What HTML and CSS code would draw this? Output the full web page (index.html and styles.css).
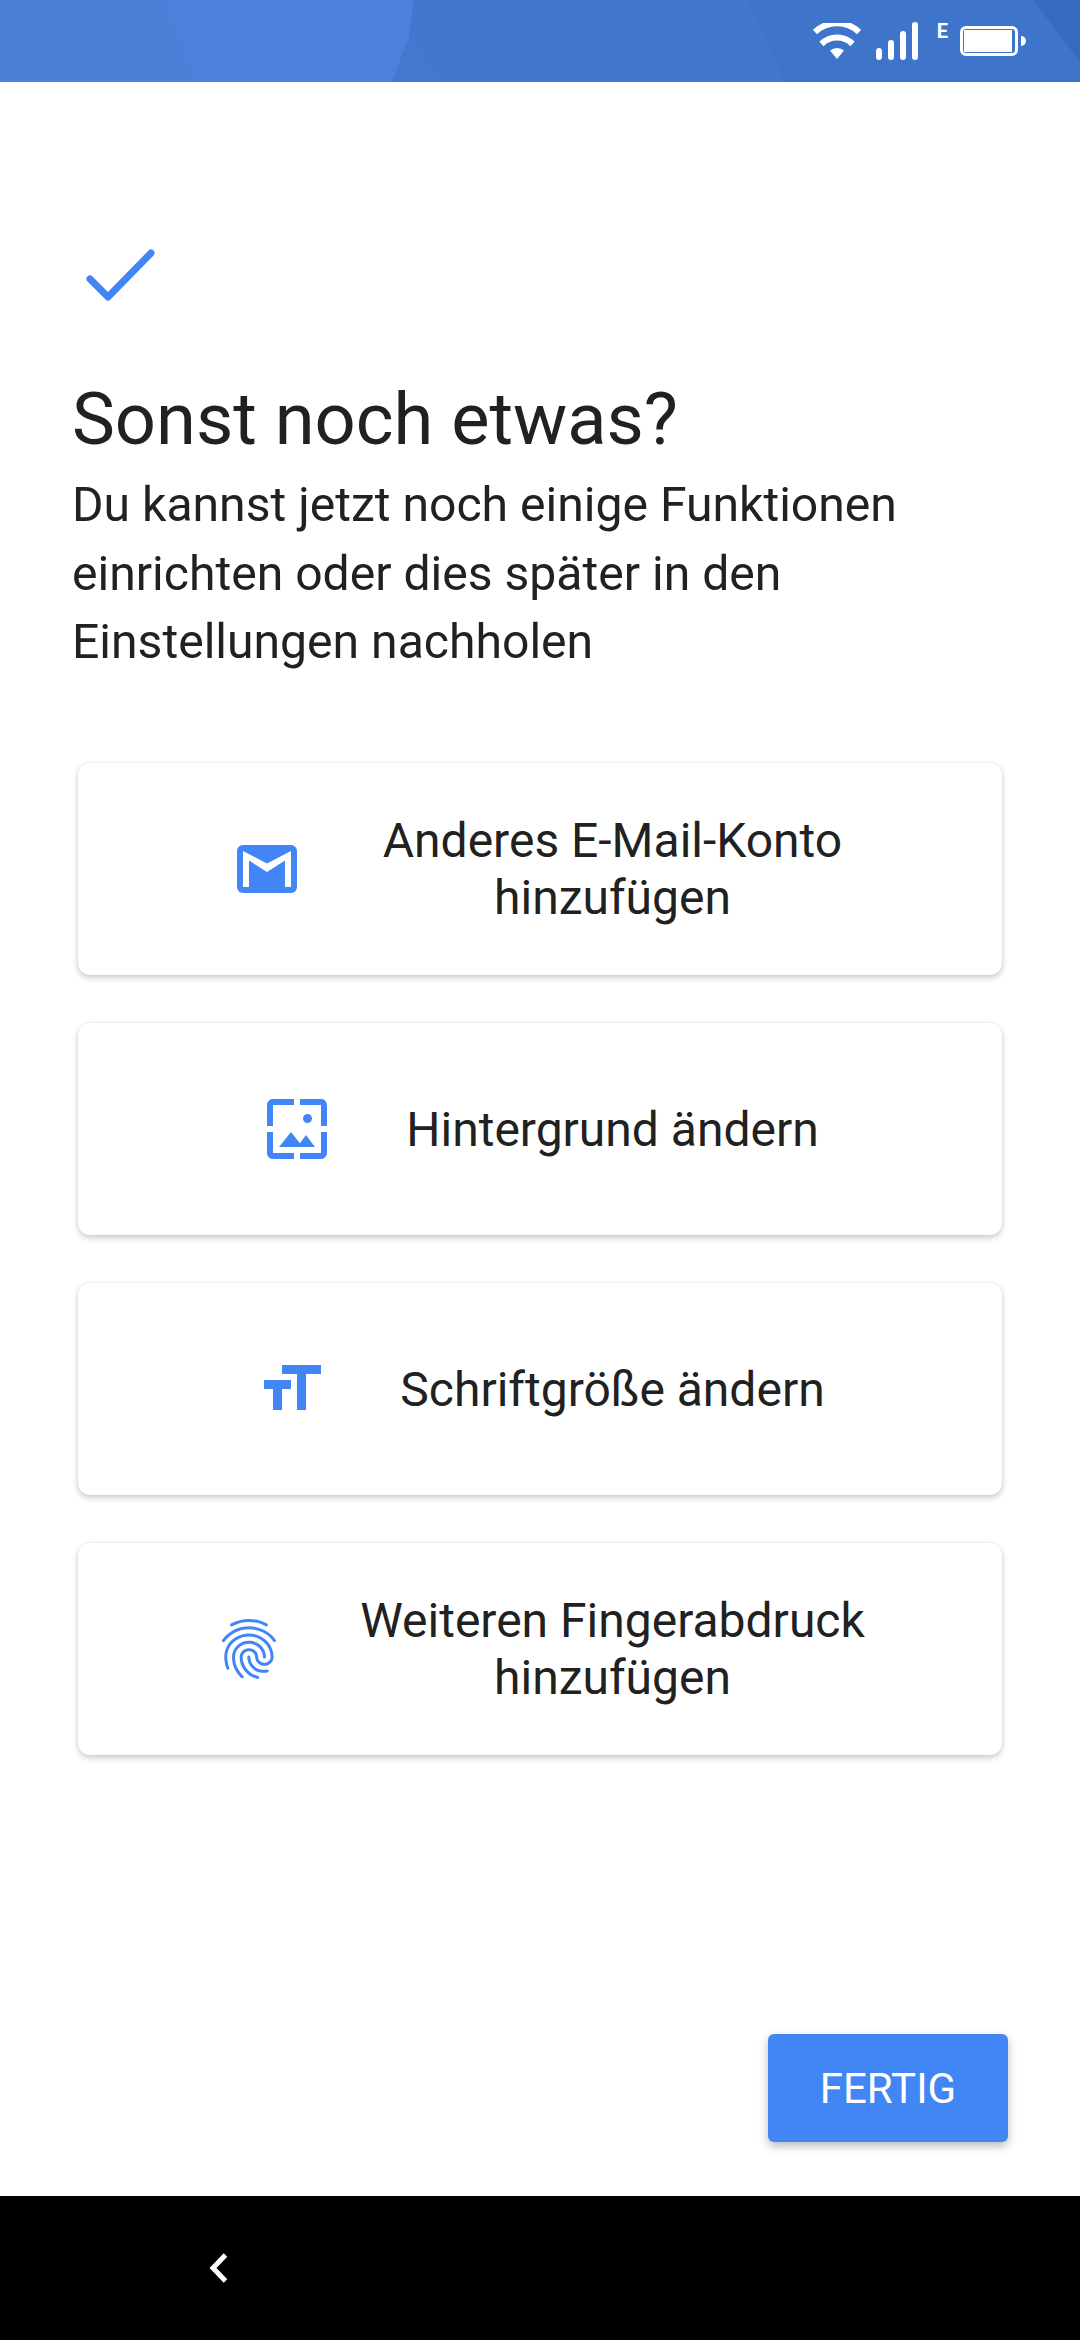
FILE: index.html
```html
<!DOCTYPE html>
<html lang="de">
<head>
    <meta charset="UTF-8">
    <meta name="viewport" content="width=device-width, initial-scale=1.0">
    <title>Sonst noch etwas?</title>
    <link rel="stylesheet" href="styles.css">
</head>
<body>
    <div class="screen">
        <!-- Status bar -->
        <header class="status-bar">
            <svg class="status-bg" viewBox="0 0 1080 82" preserveAspectRatio="none">
                <polygon points="0,0 162,0 193,82 0,82" fill="#4a80d8"/>
                <polygon points="162,0 414,0 409,38 392,82 193,82" fill="#4b81da"/>
                <polygon points="414,0 747,0 785,82 446,82 409,38" fill="#4177cf"/>
                <polygon points="392,82 409,38 446,82" fill="#4378d1"/>
                <polygon points="747,0 1033,0 1080,62 1080,82 785,82" fill="#3f74cb"/>
                <polygon points="1033,0 1080,0 1080,62" fill="#386bc0"/>
            </svg>
            <div class="status-icons">
                <svg class="icon-wifi" viewBox="0 0 48 36">
                    <path d="M24 36 L17 27.5 A11 11 0 0 1 31 27.5 Z" fill="#fff"/>
                    <path d="M8.5 17.5 A22 22 0 0 1 39.5 17.5" class="wifi-arc" transform="translate(0 3.5)"/>
                    <path d="M2 9 A32 32 0 0 1 46 9" class="wifi-arc"/>
                </svg>
                <div class="signal">
                    <span class="bar bar-1"></span>
                    <span class="bar bar-2"></span>
                    <span class="bar bar-3"></span>
                    <span class="bar bar-4"></span>
                </div>
                <span class="net-type">E</span>
                <div class="battery">
                    <div class="battery-body"><div class="battery-fill"></div></div>
                    <div class="battery-nub"></div>
                </div>
            </div>
        </header>

        <main class="content">
            <svg class="check" viewBox="0 0 72 54">
                <path d="M4 30 L22 48 L65 4" fill="none" stroke="#4285f4" stroke-width="7" stroke-linecap="round" stroke-linejoin="round"/>
            </svg>

            <h1>Sonst noch etwas?</h1>
            <p class="intro">Du kannst jetzt noch einige Funktionen einrichten oder dies später in den Einstellungen nachholen</p>

            <div class="actions">
                <div class="action-card">
                    <svg class="action-icon" viewBox="0 0 72 72">
                        <rect x="6" y="12" width="60" height="48" rx="6" fill="#4285f4"/>
                        <polygon points="12,18 36,30.5 60,18 60,54 54,54 54,27.5 36,39 18,27.5 18,54 12,54" fill="#fff"/>
                    </svg>
                    <span class="action-label wrapped">Anderes E-Mail-Konto<br>hinzufügen</span>
                </div>
                <div class="action-card">
                    <svg class="action-icon" viewBox="0 0 24 24">
                        <path d="M4 4h7V2H4c-1.1 0-2 .9-2 2v7h2V4zm6 9l-4 5h12l-3-4-2.03 2.71L10 13zm7-4.5c0-.83-.67-1.5-1.5-1.5S14 7.67 14 8.5s.67 1.5 1.5 1.5S17 9.33 17 8.5zM20 2h-7v2h7v7h2V4c0-1.1-.9-2-2-2zm0 18h-7v2h7c1.1 0 2-.9 2-2v-7h-2v7zM4 13H2v7c0 1.1.9 2 2 2h7v-2H4v-7z" fill="#4285f4"/>
                    </svg>
                    <span class="action-label">Hintergrund ändern</span>
                </div>
                <div class="action-card">
                    <svg class="action-icon" viewBox="0 0 24 24">
                        <path d="M9 4v3h5v12h3V7h5V4H9zm-6 8h3v7h3v-7h3V9H3v3z" fill="#4285f4"/>
                    </svg>
                    <span class="action-label">Schriftgröße ändern</span>
                </div>
                <div class="action-card">
                    <svg class="action-icon fingerprint" viewBox="0 0 24 24">
                        <path d="M17.81 4.47c-.08 0-.16-.02-.23-.06C15.66 3.42 14 3 12.01 3c-1.98 0-3.86.47-5.57 1.41-.24.13-.54.04-.68-.2-.13-.24-.04-.55.2-.68C7.82 2.52 9.86 2 12.01 2c2.13 0 3.99.47 6.03 1.52.25.13.34.43.21.67-.09.18-.26.28-.44.28zM3.5 9.72c-.1 0-.2-.03-.29-.09-.23-.16-.28-.47-.12-.7.99-1.4 2.25-2.5 3.75-3.27C9.98 4.04 14 4.03 17.15 5.65c1.5.77 2.76 1.86 3.75 3.25.16.22.11.54-.12.7-.23.16-.54.11-.7-.12-.9-1.26-2.04-2.25-3.39-2.94-2.87-1.47-6.54-1.47-9.4.01-1.36.7-2.5 1.7-3.4 2.96-.08.14-.23.21-.39.21zm6.25 12.07c-.13 0-.26-.05-.35-.15-.87-.87-1.34-1.43-2.01-2.64-.69-1.23-1.05-2.73-1.05-4.34 0-2.97 2.54-5.39 5.66-5.39s5.66 2.42 5.66 5.39c0 .28-.22.5-.5.5s-.5-.22-.5-.5c0-2.42-2.09-4.39-4.66-4.39-2.57 0-4.66 1.97-4.66 4.39 0 1.44.32 2.77.93 3.85.64 1.15 1.08 1.64 1.85 2.42.19.2.19.51 0 .71-.11.1-.24.15-.37.15zm7.17-1.85c-1.19 0-2.24-.3-3.1-.89-1.49-1.01-2.38-2.65-2.38-4.39 0-.28.22-.5.5-.5s.5.22.5.5c0 1.41.72 2.74 1.94 3.56.71.48 1.54.71 2.54.71.24 0 .64-.03 1.04-.1.27-.05.53.13.58.41.05.27-.13.53-.41.58-.57.11-1.07.12-1.21.12zM14.91 22c-.04 0-.09-.01-.13-.02-1.59-.44-2.63-1.03-3.72-2.1-1.4-1.39-2.17-3.24-2.17-5.22 0-1.62 1.38-2.94 3.08-2.94 1.7 0 3.08 1.32 3.08 2.94 0 1.07.93 1.94 2.08 1.94s2.08-.87 2.08-1.94c0-3.77-3.25-6.83-7.25-6.83-2.84 0-5.44 1.58-6.61 4.03-.39.81-.59 1.76-.59 2.8 0 .78.07 2.01.67 3.61.1.26-.03.55-.29.64-.26.1-.55-.04-.64-.29-.49-1.31-.73-2.61-.73-3.96 0-1.2.23-2.29.68-3.24 1.33-2.79 4.28-4.6 7.51-4.6 4.55 0 8.25 3.51 8.25 7.83 0 1.62-1.38 2.94-3.08 2.94s-3.08-1.32-3.08-2.94c0-1.07-.93-1.94-2.08-1.94s-2.08.87-2.08 1.94c0 1.71.66 3.31 1.87 4.51.95.94 1.86 1.46 3.27 1.85.27.07.42.35.35.61-.05.23-.26.38-.47.38z" fill="#4285f4"/>
                    </svg>
                    <span class="action-label wrapped">Weiteren Fingerabdruck<br>hinzufügen</span>
                </div>
            </div>

            <div class="footer-row">
                <button class="done-button">FERTIG</button>
            </div>
        </main>

        <!-- Navigation bar -->
        <nav class="nav-bar">
            <svg class="nav-back" viewBox="0 0 22 30">
                <path d="M17.5 2 L5 15 L17.5 28" fill="none" stroke="#fff" stroke-width="5"/>
            </svg>
        </nav>
    </div>
</body>
</html>
```

FILE: styles.css
```css
/* Reset and base styles */
* {
    box-sizing: border-box;
    margin: 0;
    padding: 0;
}

body {
    font-family: Roboto, "Liberation Sans", sans-serif;
    background-color: #fff;
    color: #212121;
}

.screen {
    width: 1080px;
    height: 2340px;
    display: flex;
    flex-direction: column;
    overflow: hidden;
}

/* Status bar */
.status-bar {
    position: relative;
    height: 82px;
    flex-shrink: 0;
    background-color: #4177cf;
}

.status-bg {
    position: absolute;
    top: 0;
    left: 0;
    width: 100%;
    height: 100%;
}

.status-icons {
    position: relative;
    height: 100%;
    display: flex;
    justify-content: flex-end;
    padding-right: 54px;
    color: #fff;
}

.icon-wifi {
    width: 48px;
    height: 36px;
    margin-top: 23px;
}

.wifi-arc {
    fill: none;
    stroke: #fff;
    stroke-width: 6;
}

.signal {
    display: flex;
    align-items: flex-end;
    gap: 6px;
    height: 38px;
    margin: 22px 0 0 15px;
}

.bar {
    width: 6px;
    background-color: #fff;
    border-radius: 3px;
}

.bar-1 { height: 12px; }
.bar-2 { height: 20px; }
.bar-3 { height: 29px; }
.bar-4 { height: 38px; }

.net-type {
    margin: 20px 0 0 19px;
    font-size: 20px;
    font-weight: 700;
    line-height: 23px;
}

.battery {
    display: flex;
    align-items: center;
    height: 30px;
    margin: 26px 0 0 12px;
}

.battery-body {
    width: 58px;
    height: 30px;
    border: 3px solid #fff;
    border-radius: 6px;
    padding: 1px;
}

.battery-fill {
    width: 48px;
    height: 100%;
    background-color: #fff;
}

.battery-nub {
    width: 5px;
    height: 10px;
    margin-left: 3px;
    background-color: #fff;
    border-radius: 0 5px 5px 0;
}

/* Main content */
.content {
    flex: 1;
    display: flex;
    flex-direction: column;
    padding: 167px 72px 0 72px;
}

.check {
    width: 72px;
    height: 54px;
    margin-left: 14px;
}

h1 {
    margin-top: 73px;
    font-size: 72.2px;
    font-weight: 400;
    line-height: 88px;
}

.intro {
    font-size: 48.1px;
    line-height: 68.67px;
    width: 900px;
    margin-top: 7px;
}

/* Option cards */
.actions {
    display: flex;
    flex-direction: column;
    gap: 48px;
    margin: 86px 0 0 6px;
    width: 924px;
}

.action-card {
    height: 212px;
    display: flex;
    align-items: center;
    justify-content: center;
    gap: 73px;
    background-color: #fff;
    border-radius: 12px;
    box-shadow: 0 3px 6px rgba(0, 0, 0, 0.2), 0 0 3px rgba(0, 0, 0, 0.08);
}

.action-icon {
    width: 72px;
    height: 72px;
    flex-shrink: 0;
}

.action-icon.fingerprint {
    margin: 0 -5px 0 5px;
}

.action-label {
    font-size: 48px;
    line-height: 57px;
    text-align: center;
}

.action-label.wrapped {
    margin: 0 7px;
}

/* Done button */
.footer-row {
    flex: 1;
    display: flex;
    justify-content: flex-end;
    align-items: flex-end;
    padding-bottom: 54px;
}

.done-button {
    width: 240px;
    height: 108px;
    background-color: #4285f4;
    color: #fff;
    border: none;
    border-radius: 6px;
    font-family: inherit;
    font-size: 42px;
    box-shadow: 0 4px 10px rgba(0, 0, 0, 0.28);
}

/* Navigation bar */
.nav-bar {
    height: 144px;
    flex-shrink: 0;
    background-color: #000;
    display: flex;
    align-items: center;
    padding-left: 208px;
}

.nav-back {
    width: 22px;
    height: 30px;
}
```
